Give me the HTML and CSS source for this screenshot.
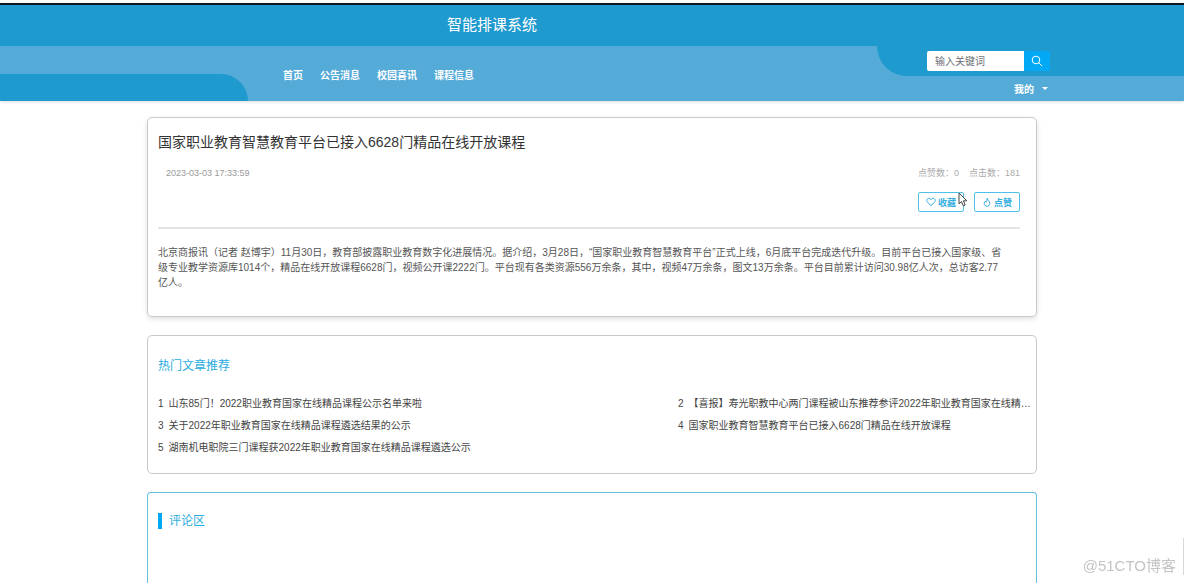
FILE: index.html
```html
<!DOCTYPE html>
<html lang="zh-CN">
<head>
<meta charset="utf-8">
<meta name="viewport" content="width=device-width, initial-scale=1">
<title>智能排课系统</title>
<link rel="stylesheet" href="styles.css">
</head>
<body>
<header class="header">
  <div class="brand">智能排课系统</div>
  <div class="band">
    <div class="band-left"></div>
    <nav class="nav">
      <a href="#">首页</a>
      <a href="#">公告消息</a>
      <a href="#">校园喜讯</a>
      <a href="#">课程信息</a>
    </nav>
    <div class="band-right">
      <form class="search">
        <input class="search-input" type="text" placeholder="输入关键词" aria-label="输入关键词">
        <button class="search-button" type="button" aria-label="搜索">
          <svg width="12" height="12" viewBox="0 0 12 12" fill="none" stroke="currentColor"><circle cx="5" cy="5" r="3.8"/><path d="M7.8 7.8 11 11"/></svg>
        </button>
      </form>
      <button class="user-menu" type="button" aria-haspopup="true">我的<span class="caret"></span></button>
    </div>
  </div>
</header>
<main class="main">
  <article class="card article">
    <h1 class="article-title">国家职业教育智慧教育平台已接入6628门精品在线开放课程</h1>
    <div class="meta">
      <time datetime="2023-03-03T17:33:59">2023-03-03 17:33:59</time>
      <div class="stats"><span>点赞数：0</span><span>点击数：181</span></div>
    </div>
    <div class="actions">
      <button class="action" type="button">
        <svg width="10" height="10" viewBox="0 0 10 10" fill="none" stroke="currentColor"><path d="M5 8.8 1.5 5.2C-.1 3.2 1.3 1.3 2.9 1.3 4 1.3 4.7 2 5 2.7 5.3 2 6 1.3 7.1 1.3 8.7 1.3 10.1 3.2 8.5 5.2Z"/></svg>收藏
      </button>
      <button class="action" type="button">
        <svg width="10" height="10" viewBox="0 0 10 10" fill="none" stroke="currentColor"><path d="M5.2 1C5.4 3 7.8 4 7.8 6.4 7.8 8.1 6.6 9.2 5 9.2S2.2 8.1 2.2 6.4C2.2 5.4 2.7 4.7 3.3 4.1L4 5.1C4.9 4 5.2 2.5 5.2 1Z"/></svg>点赞
      </button>
      <svg class="pointer" width="10" height="15" viewBox="0 0 10 15" fill="#fff" stroke="#444"><path d="M1 1v10.8l2.5-2.3 1.8 4.3 1.9-.8-1.8-4.2h3.4Z"/></svg>
    </div>
    <p class="article-body">北京商报讯（记者 赵博宇）11月30日，教育部披露职业教育数字化进展情况。据介绍，3月28日，“国家职业教育智慧教育平台”正式上线，6月底平台完成迭代升级。目前平台已接入国家级、省<br>级专业教学资源库1014个，精品在线开放课程6628门，视频公开课2222门。平台现有各类资源556万余条，其中，视频47万余条，图文13万余条。平台目前累计访问30.98亿人次，总访客2.77<br>亿人。</p>
  </article>
  <section class="card hot">
    <h2 class="hot-title">热门文章推荐</h2>
    <div class="hot-list">
      <a href="#"><span class="rank">1</span>山东85门！2022职业教育国家在线精品课程公示名单来啦</a>
      <a href="#"><span class="rank">2</span>【喜报】寿光职教中心两门课程被山东推荐参评2022年职业教育国家在线精…</a>
      <a href="#"><span class="rank">3</span>关于2022年职业教育国家在线精品课程遴选结果的公示</a>
      <a href="#"><span class="rank">4</span>国家职业教育智慧教育平台已接入6628门精品在线开放课程</a>
      <a href="#"><span class="rank">5</span>湖南机电职院三门课程获2022年职业教育国家在线精品课程遴选公示</a>
    </div>
  </section>
  <section class="card comments">
    <h2 class="comments-title">评论区</h2>
  </section>
</main>
<div class="watermark">@51CTO博客</div>
<div class="side-tab"></div>
</body>
</html>
```

FILE: styles.css
```css
* { box-sizing: border-box; }

body {
  margin: 0;
  min-height: 100vh;
  display: flex;
  flex-direction: column;
  background: #fff;
  color: #444;
  font-family: "Liberation Sans", "Noto Sans CJK SC", sans-serif;
  font-size: 10px;
}

h1, h2, p { margin: 0; font-weight: 400; }
a { color: inherit; text-decoration: none; }
button, input { font: inherit; }
svg { display: block; flex: none; }

.header {
  margin-top: 3px;
  border-top: 2px solid #0b1a22;
  box-shadow: 0 1px 3px rgba(0, 0, 0, 0.14);
}

.brand {
  height: 41px;
  padding-right: 200px;
  background: #1f9ace;
  color: #fff;
  font-size: 15px;
  line-height: 40px;
  text-align: center;
}

.band {
  display: grid;
  grid-template-columns: 248px 1fr 307px;
  height: 55px;
  background: #55abd7;
}

.band-left {
  align-self: end;
  height: 27px;
  border-top-right-radius: 27px;
  background: #1f9ace;
}

.nav {
  display: flex;
  align-items: center;
  gap: 17px;
  padding: 2px 0 0 35px;
  color: #fff;
  font-weight: 700;
}

.band-right {
  display: flex;
  flex-direction: column;
  align-items: flex-start;
}

.search {
  display: flex;
  width: 100%;
  height: 30px;
  padding: 5px 0 5px 50px;
  border-bottom-left-radius: 30px;
  background: #1f9ace;
}

.search-input {
  width: 97px;
  padding: 0 8px;
  border: 0;
  border-radius: 2px 0 0 2px;
  background: #fff;
}

.search-input::placeholder { color: #6c6f75; }

.search-button {
  display: flex;
  align-items: center;
  justify-content: center;
  width: 26px;
  padding: 0;
  border: 0;
  border-radius: 0 2px 2px 0;
  background: #03a9f4;
  color: #fff;
}

.user-menu {
  display: flex;
  align-items: center;
  gap: 8px;
  height: 25px;
  margin-left: 137px;
  padding: 0;
  border: 0;
  background: none;
  color: #fff;
  font-weight: 700;
}

.caret {
  border: 3px solid transparent;
  border-top-color: #fff;
  border-bottom: 0;
}

.main {
  flex: 1;
  display: flex;
  flex-direction: column;
  gap: 18px;
  width: 100%;
  max-width: 890px;
  margin: 0 auto;
  padding-top: 16px;
}

.card {
  padding: 0 16px 0 10px;
  border: 1px solid #c6cacc;
  border-radius: 5px;
}

.article {
  padding-bottom: 26px;
  box-shadow: 0 2px 5px rgba(0, 0, 0, 0.13);
}

.article-title {
  padding-top: 14px;
  color: #333;
  font-size: 14px;
  line-height: 20px;
}

.meta {
  display: flex;
  justify-content: space-between;
  padding: 12px 0 0 8px;
  color: #999;
  font-size: 9px;
  line-height: 18px;
}

.stats { display: flex; gap: 10px; color: #aaa; }

.actions {
  position: relative;
  display: flex;
  justify-content: flex-end;
  gap: 10px;
  padding: 10px 0 15px;
  border-bottom: 2px solid #e2e4e5;
}

.action {
  display: flex;
  align-items: center;
  justify-content: center;
  gap: 2px;
  width: 46px;
  height: 20px;
  padding: 0;
  border: 1px solid #4fc0e8;
  border-radius: 2px;
  background: #fff;
  color: #35aee0;
  font-size: 9px;
  font-weight: 700;
}

.pointer {
  position: absolute;
  top: 10px;
  right: 52px;
}

.article-body {
  padding-top: 16px;
  color: #555;
  line-height: 15px;
  white-space: nowrap;
}

.hot { padding: 0 4px 14px 10px; }

.hot-title {
  padding: 20px 0 17px;
  color: #2bace0;
  font-size: 12px;
  line-height: 20px;
}

.hot-list {
  display: grid;
  grid-template-columns: 1fr 354px;
  column-gap: 40px;
  line-height: 22px;
}

.hot-list a { white-space: nowrap; }

.rank { margin-right: 5px; }

.comments {
  flex: 1;
  border-color: #62c3dd;
  border-bottom: 0;
  border-radius: 4px 4px 0 0;
}

.comments-title {
  margin-top: 20px;
  padding-left: 7px;
  border-left: 4px solid #03a9f4;
  color: #2bace0;
  font-size: 12px;
  line-height: 16px;
}

.watermark {
  position: fixed;
  right: 8px;
  bottom: 7px;
  color: #c4c4c4;
  font-size: 15px;
  line-height: 20px;
}

.side-tab {
  position: fixed;
  right: 0;
  bottom: 8px;
  width: 1px;
  height: 37px;
  background: #d4dadb;
}
```
